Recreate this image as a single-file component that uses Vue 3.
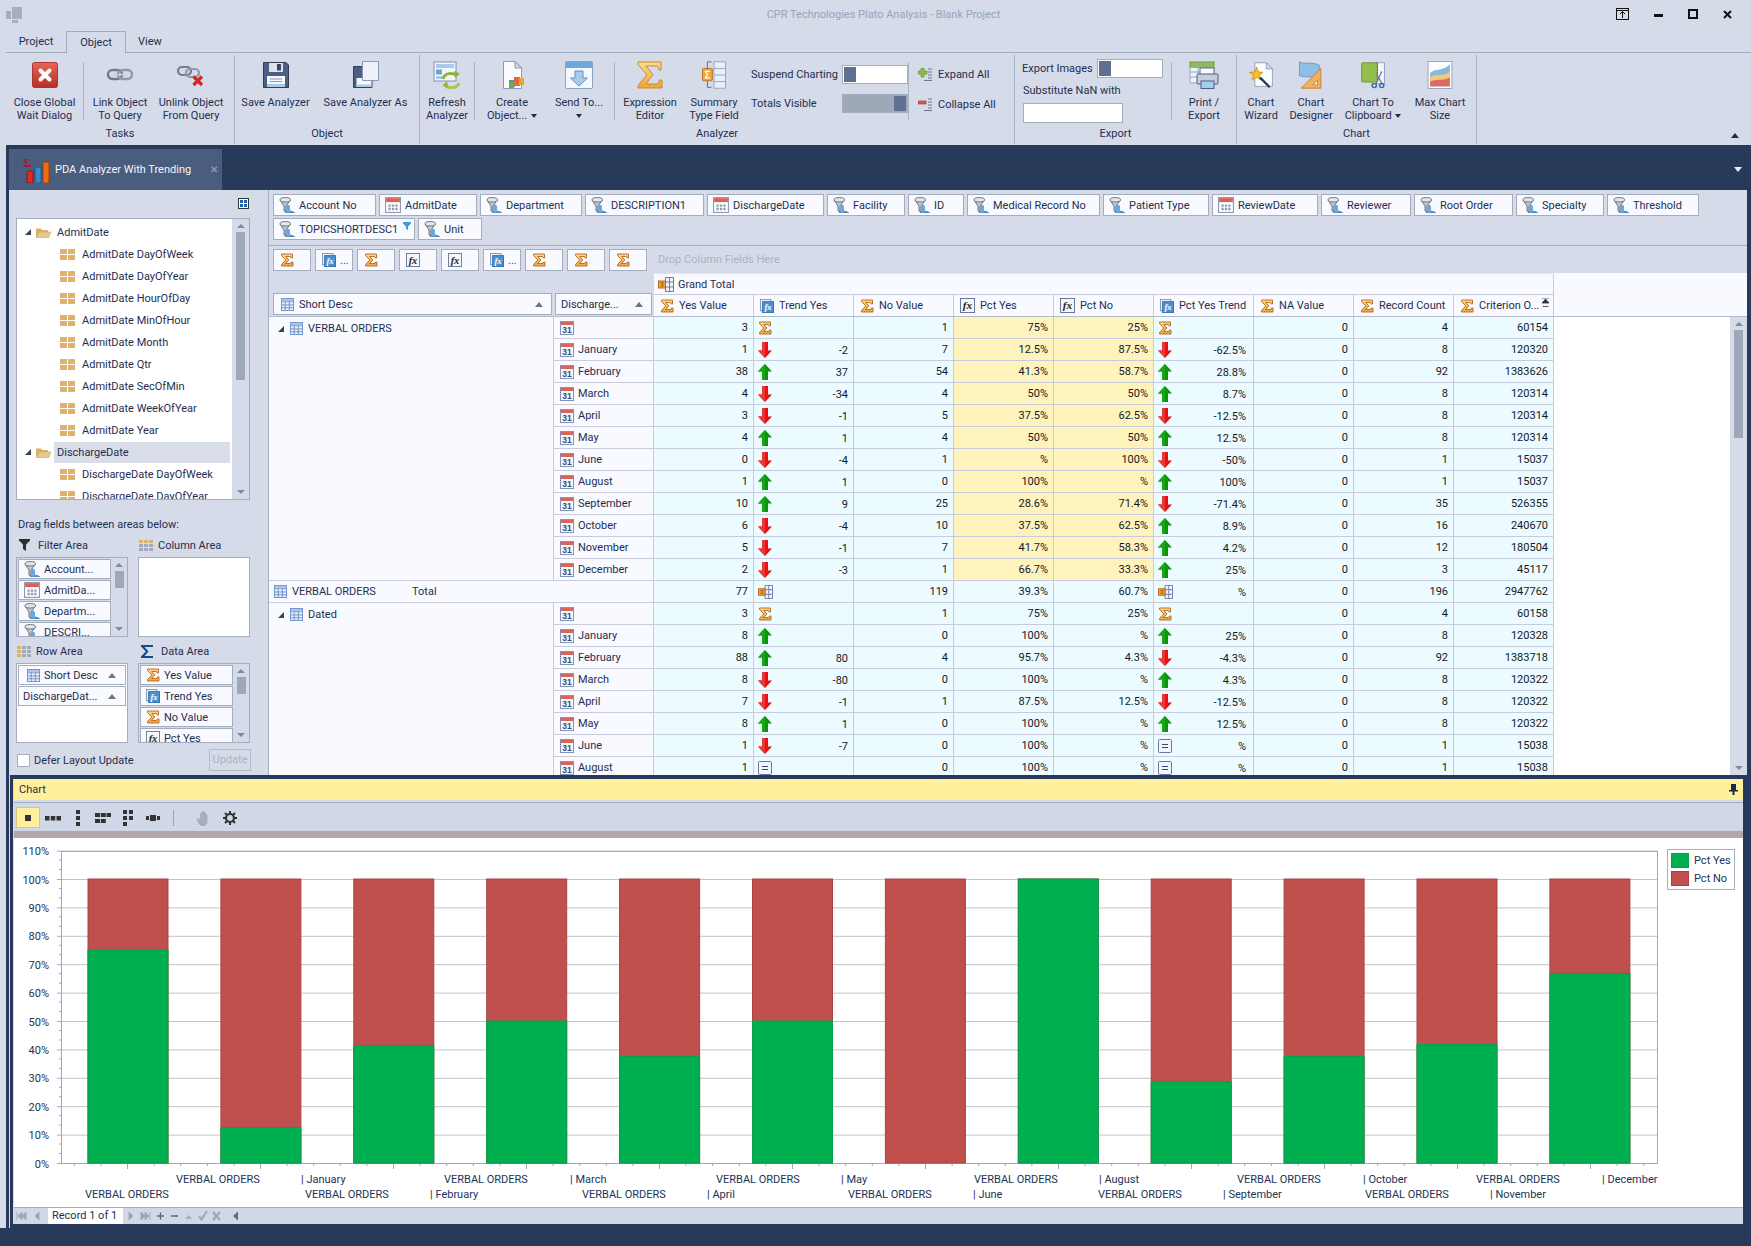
<template>
  <div class="app">
    <!-- icon sheet -->
    <svg class="defs" width="0" height="0">
      <defs>
        <linearGradient id="g-red" x1="0" y1="0" x2="0" y2="1"><stop offset="0" stop-color="#e8655a" /><stop offset="1" stop-color="#b92e27" /></linearGradient>
        <linearGradient id="g-sig" x1="0" y1="0" x2="0" y2="1"><stop offset="0" stop-color="#fbd98a" /><stop offset="1" stop-color="#eda63c" /></linearGradient>
      </defs>
      <symbol id="i-field" viewBox="0 0 16 16">
        <path d="M6.5 8.5V15.5A8 7.500 0 0 1 15.500 15.500H6.500Z" transform="translate(0 0)" fill="#5f9fd8" stroke="#3c7db8" stroke-width=".8" />
        <path d="M1 3L5 9V14L7 15V9L11.500 3Z" fill="#c3c8cf" stroke="#70757d" />
        <path d="M11 9.500V15.500H7V7.500C9 7.500 11 8 11 9.500Z" fill="#6aa8e0" />
        <ellipse cx="6.300" cy="2.800" rx="5.300" ry="2.200" fill="#e4e7ea" stroke="#70757d" />
      </symbol>
      <symbol id="i-date" viewBox="0 0 14 14">
        <rect x=".5" y=".5" width="13" height="13" fill="#fff" stroke="#8f9ab0" />
        <rect x="1" y="1" width="12" height="3.500" fill="#dc5f55" />
        <path d="M3 6.500h2v2H3zM6 6.500h2v2H6zM9 6.500h2v2H9zM3 9.500h2v2H3zM6 9.500h2v2H6zM9 9.500h2v2H9z" fill="#8a9bbd" />
      </symbol>
      <symbol id="i-sigma" viewBox="0 0 14 14">
        <path d="M1.500 1H12.500V5H11.200L10.500 3.500H5.800L8.800 7L5.500 10.500H10.800L11.500 9H13V13H1.500V11.500L5.800 7L1.500 2.500Z" fill="url(#g-sig)" stroke="#b8661a" stroke-width=".9" />
      </symbol>
      <symbol id="i-fx" viewBox="0 0 16 16">
        <rect x=".5" y=".5" width="15" height="15" fill="#f4f6fb" stroke="#5d7196" />
        <text x="8" y="12" text-anchor="middle" font-family="Liberation Serif, serif" font-style="italic" font-weight="700" font-size="12" fill="#222">fx</text>
      </symbol>
      <symbol id="i-fxb" viewBox="0 0 16 16">
        <rect x=".5" y=".5" width="12" height="13" fill="#eef1f7" stroke="#8090ad" />
        <rect x="3" y="3" width="12.500" height="12.500" fill="#4b90d3" stroke="#2f6cab" />
        <text x="9.200" y="13" text-anchor="middle" font-family="Liberation Serif, serif" font-style="italic" font-weight="700" font-size="10" fill="#fff">fx</text>
      </symbol>
      <symbol id="i-table" viewBox="0 0 14 14">
        <rect x=".5" y=".5" width="13" height="13" fill="#e8f0fb" stroke="#6c90c6" />
        <path d="M.5 4h13M.5 7.500h13M.5 10.500h13M4.500.5v13M9 .5v13" stroke="#6c90c6" fill="none" />
        <rect x="1" y="1" width="12" height="2.500" fill="#a9c4e8" />
      </symbol>
      <symbol id="i-cal" viewBox="0 0 14 14">
        <rect x=".5" y=".5" width="13" height="13" fill="#f5f7fc" stroke="#7f93bd" />
        <rect x="1" y="1" width="12" height="3" fill="#d9645a" />
        <text x="7" y="12.300" text-anchor="middle" font-family="Liberation Sans, sans-serif" font-weight="700" font-size="8.500" fill="#3d4d70">31</text>
      </symbol>
      <symbol id="i-up" viewBox="0 0 14 16"><path d="M7 0L14 7.500H10V16H4V7.500H0Z" fill="#0f930f" /><path d="M7 0L7 16H4V7.500H0Z" fill="#16a616" /></symbol>
      <symbol id="i-down" viewBox="0 0 14 16"><path d="M4 0H10V8.500H14L7 16L0 8.500H4Z" fill="#f20c0c" /><path d="M4 0H7V16L0 8.500H4Z" fill="#e63a3a" /></symbol>
      <symbol id="i-eq" viewBox="0 0 14 14"><rect x=".5" y=".5" width="13" height="13" rx="1" fill="#f2f5fb" stroke="#6677a6" /><path d="M4 5.500h6M4 8.500h6" stroke="#3a4668" /></symbol>
      <symbol id="i-gt" viewBox="0 0 16 15">
        <path d="M7.500.5H15.500V14.500H7.500ZM7.500 5H15.500M7.500 10H15.500M11.500.5V14.500" fill="#f2f5fb" stroke="#6a7fa8" />
        <rect x=".5" y="4" width="7" height="7" fill="#f0a63c" stroke="#b8661a" />
        <path d="M2.500 6h3l-1.500 1.500L5.500 9h-3" fill="none" stroke="#8a4a10" stroke-width=".8" />
      </symbol>
      <symbol id="i-folder" viewBox="0 0 15 11">
        <path d="M0 1.500H5L6 3H12V5H3.500L0 11Z" fill="#d8b26b" />
        <path d="M3.500 5H15L12.500 11H0Z" fill="#e7c88f" stroke="#cfa964" stroke-width=".6" />
      </symbol>
      <symbol id="i-grid" viewBox="0 0 15 11"><path d="M0 0h7v5H0zM8 0h7v5H8zM0 6h7v5H0zM8 6h7v5H8z" fill="#dcb26c" /></symbol>
      <symbol id="i-grid-col" viewBox="0 0 14 11">
        <path d="M0 0h4v3H0zM5 0h4v3H5zM10 0h4v3h-4z" fill="#dcb26c" />
        <path d="M0 4h4v3H0zM5 4h4v3H5zM10 4h4v3h-4zM0 8h4v3H0zM5 8h4v3H5zM10 8h4v3h-4z" fill="#a3abba" />
      </symbol>
      <symbol id="i-grid-row" viewBox="0 0 14 11">
        <path d="M0 0h4v3H0zM0 4h4v3H0zM0 8h4v3H0z" fill="#dcb26c" />
        <path d="M5 0h4v3H5zM10 0h4v3h-4zM5 4h4v3H5zM10 4h4v3h-4zM5 8h4v3H5zM10 8h4v3h-4z" fill="#a3abba" />
      </symbol>
      <symbol id="i-funnel" viewBox="0 0 11 12"><path d="M0 0H11V1.500L7 5.500V12L4 10V5.500L0 1.500Z" fill="#2e2e2e" /></symbol>
      <symbol id="i-sigma-blue" viewBox="0 0 12 13"><path d="M0 0H12V2H3.500L7.500 6.500L3.500 11H12V13H0V11.500L4.800 6.500L0 1.500Z" fill="#0e4d8f" /></symbol>
      <symbol id="i-filter-small" viewBox="0 0 8 8"><path d="M0 0H8V1.500L5 4.500V8L3 7V4.500L0 1.500Z" fill="#3d9be0" /></symbol>
      <symbol id="i-tab" viewBox="0 0 27 27">
        <text x="0" y="11" font-family="Liberation Serif, serif" font-weight="700" font-size="13" fill="#b01818">Σ</text>
        <rect x="4" y="15" width="6" height="12" rx="1" fill="#d92b20" stroke="#7c120c" stroke-width=".8" />
        <rect x="12" y="11" width="6" height="16" rx="1" fill="#3d87c8" stroke="#1c4d7c" stroke-width=".8" />
        <rect x="20" y="6" width="6" height="21" rx="1" fill="#f06a12" stroke="#8c3a08" stroke-width=".8" />
      </symbol>

      <!-- ribbon -->
      <symbol id="r-close" viewBox="0 0 28 28">
        <rect x="1.500" y="1.500" width="25" height="25" rx="2" fill="url(#g-red)" stroke="#a33a33" />
        <path d="M9.500 9.500L18.500 18.500M18.500 9.500L9.500 18.500" stroke="#fff" stroke-width="4" stroke-linecap="round" />
      </symbol>
      <symbol id="r-link" viewBox="0 0 28 28">
        <rect x="2" y="9" width="14" height="9" rx="4.500" fill="none" stroke="#6f7d92" stroke-width="2.400" />
        <rect x="12" y="9" width="14" height="9" rx="4.500" fill="none" stroke="#8d99ab" stroke-width="2.400" />
        <path d="M8 13.500H20" stroke="#c5ccd6" stroke-width="1.600" />
      </symbol>
      <symbol id="r-unlink" viewBox="0 0 28 28">
        <rect x="1" y="6" width="13" height="8" rx="4" fill="none" stroke="#6f7d92" stroke-width="2.200" />
        <rect x="9" y="8" width="13" height="8" rx="4" fill="none" stroke="#8d99ab" stroke-width="2.200" />
        <path d="M16.500 15.500L25 24M25 15.500L16.500 24" stroke="#d9261c" stroke-width="3.200" />
      </symbol>
      <symbol id="r-save" viewBox="0 0 28 28">
        <path d="M1.500 1.500H24L26.500 4V26.500H1.500Z" fill="#4d5f82" stroke="#2f3d5a" />
        <rect x="7" y="2" width="14" height="9" fill="#dfe4ec" /><rect x="15" y="3" width="4" height="6.500" fill="#3a4866" />
        <rect x="5" y="15" width="18" height="11" fill="#f5f7fa" /><rect x="5" y="23" width="18" height="3" fill="#a7cbe8" />
        <path d="M8 18h12M8 20.500h12" stroke="#8b97ad" />
      </symbol>
      <symbol id="r-saveas" viewBox="0 0 28 28">
        <path d="M1.500 5.500H20V26.500H1.500Z" fill="#4d5f82" stroke="#2f3d5a" />
        <rect x="4.500" y="17" width="15" height="9" fill="#f5f7fa" /><rect x="4.500" y="23.500" width="15" height="2.500" fill="#a7cbe8" />
        <path d="M10.500 .5H26.500V19.500H10.500Z" fill="#eef2f8" stroke="#8a9ab8" />
      </symbol>
      <symbol id="r-refresh" viewBox="0 0 28 28">
        <rect x="1" y="1" width="22" height="19" fill="#f2f6fb" stroke="#7d93b8" />
        <rect x="3" y="3" width="18" height="4" fill="#a9c9ea" /><rect x="3" y="8.500" width="6" height="5" fill="#6ea3d8" /><rect x="3" y="15" width="6" height="3" fill="#a9c9ea" />
        <path d="M10 18A8 7 0 0 1 24 15" fill="none" stroke="#8bb43e" stroke-width="3" />
        <path d="M26 22A8 7 0 0 1 12 24" fill="none" stroke="#a4c94c" stroke-width="3" />
        <path d="M21 10L27 12.500L22 17ZM15 27L9.500 24.500L14 20Z" fill="#8bb43e" />
      </symbol>
      <symbol id="r-create" viewBox="0 0 28 28">
        <path d="M5.500 .5H17L23.500 7V27.500H5.500Z" fill="#fbfcfe" stroke="#8a9ab8" />
        <path d="M17 .5V7H23.500Z" fill="#cfd8e6" stroke="#8a9ab8" />
        <rect x="11" y="19" width="6" height="7" fill="#4a8fc9" /><rect x="16" y="16" width="6" height="9" fill="#e2683a" /><rect x="21" y="17" width="5" height="7" fill="#e8a33c" /><rect x="11" y="21" width="5" height="6" fill="#6cae45" />
      </symbol>
      <symbol id="r-send" viewBox="0 0 28 28">
        <rect x=".5" y=".5" width="27" height="27" rx="1" fill="#f4f8fd" stroke="#8aa2c4" />
        <rect x="1" y="1" width="26" height="6" fill="#6ea6de" />
        <path d="M10 10H18V17H22.500L14 25L5.500 17H10Z" fill="#a6cdf0" stroke="#5b8fc4" />
      </symbol>
      <symbol id="r-sigma" viewBox="0 0 28 28">
        <path d="M2 1H25V9H23L21.500 5H10L17 13.500L10 23H22L23.500 19H26V27H2V24.500L11 13.800L2 3.500Z" fill="url(#g-sig)" stroke="#c98a2c" />
      </symbol>
      <symbol id="r-summary" viewBox="0 0 30 34">
        <path d="M12 1H7V9M7 24V32H12" fill="none" stroke="#4d5a73" />
        <rect x="15" y="1" width="14" height="32" fill="#eaf0fa" stroke="#8a9ab8" />
        <path d="M15 9H29M15 17H29M15 25H29" stroke="#8a9ab8" />
        <rect x="1" y="9" width="12" height="15" rx="1" fill="#f0a63c" stroke="#b8661a" />
        <path d="M4 12.500H10M4 20.500H10M4 12.500L7.500 16.500L4 20.500" fill="none" stroke="#fff" stroke-width="1.500" />
      </symbol>
      <symbol id="r-print" viewBox="0 0 30 28">
        <rect x="1" y="1" width="24" height="5.500" fill="#8dbb55" stroke="#6e9c3a" />
        <path d="M1 6.500H25V22H1ZM1 11H25M1 16H25M9 1V22M17 1V22" fill="#eef3f9" stroke="#94a6c2" />
        <rect x="11" y="7" width="14" height="7" fill="#f7f9fc" stroke="#5d6d88" />
        <rect x="8" y="13" width="21" height="10" rx="1" fill="#c4cfde" stroke="#4f5f7c" />
        <rect x="12" y="20" width="13" height="7.500" fill="#9fd0ef" stroke="#4f5f7c" />
      </symbol>
      <symbol id="r-wizard" viewBox="0 0 28 32">
        <path d="M7 2H20L27 9V29H7Z" fill="#fbfcfe" stroke="#8a9ab8" />
        <path d="M20 2V9H27Z" fill="#d4dcea" stroke="#8a9ab8" />
        <path d="M9 7L11 12.500L16 13L12.200 16.200L13.500 21.500L9 18.500L4 21.500L5.600 16.200L1 13L6.800 12.500Z" fill="#f4c22f" stroke="#d18e0c" />
        <path d="M13 19L24 30" stroke="#2e3548" stroke-width="2.600" />
      </symbol>
      <symbol id="r-designer" viewBox="0 0 30 34">
        <path d="M1 1C8 5 14 0 25 5V21C14 17 8 21 1 18Z" fill="#8fbfe6" stroke="#5f93bf" />
        <path d="M27 9V33H3Z" fill="#f0b060" stroke="#b9782d" />
        <path d="M23 23V29H17Z" fill="#f8f1e2" stroke="#b9782d" />
      </symbol>
      <symbol id="r-clip" viewBox="0 0 28 32">
        <rect x="13" y="2" width="14" height="24" fill="#f4f7fc" stroke="#8a9ab8" />
        <rect x="1" y="2" width="18" height="22" rx="1" fill="#93bf4a" stroke="#6d9332" />
        <path d="M19 2V24" stroke="#3f6a1c" stroke-dasharray="2 1.500" />
        <path d="M17 27L24 12M25 27L18 15" stroke="#6d7a93" stroke-width="1.400" />
        <circle cx="15.500" cy="28" r="2.400" fill="none" stroke="#2f6cab" stroke-width="1.600" />
        <circle cx="24" cy="28" r="2.400" fill="none" stroke="#2f6cab" stroke-width="1.600" />
      </symbol>
      <symbol id="r-max" viewBox="0 0 30 34">
        <rect x=".5" y=".5" width="29" height="33" fill="#fcfdfe" stroke="#8a9ab8" />
        <path d="M3 15C10 8 16 14 27 4V27H3Z" fill="#8ab6de" />
        <path d="M3 20C10 14 17 20 27 13V27H3Z" fill="#f3c77c" />
        <path d="M3 25C10 21 18 25 27 20V31H3Z" fill="#d96a5f" />
      </symbol>
    </svg>

    <header class="title-bar">
      <svg class="app-logo" viewBox="0 0 16 16" width="16" height="16">
        <path d="M6 0h10v12H6zM0 4h5v8H0zM6 13h6v3H6z" fill="#a5aebf" />
      </svg>
      <div class="title-text">CPR Technologies Plato Analysis - Blank Project</div>
      <div class="win-btns">
        <svg viewBox="0 0 13 12" width="13" height="12"><rect x=".5" y=".5" width="12" height="11" fill="none" stroke="#111" /><path d="M.5 2.500h12M6.500 10V4M4 6l2.500-2.500L9 6" fill="none" stroke="#111" /></svg>
        <svg viewBox="0 0 9 12" width="9" height="12"><rect x="0" y="6" width="9" height="3" fill="#111" /></svg>
        <svg viewBox="0 0 10 10" width="10" height="10"><rect x="1" y="1" width="8" height="8" fill="none" stroke="#111" stroke-width="2" /></svg>
        <svg viewBox="0 0 9 9" width="9" height="9"><path d="M1 1l7 7M8 1L1 8" stroke="#111" stroke-width="2" /></svg>
      </div>
    </header>

    <nav class="ribbon-tabs">
      <span class="rtab">Project</span>
      <span class="rtab active">Object</span>
      <span class="rtab">View</span>
    </nav>

    <section class="ribbon">
      <div class="rgroup tasks">
        <div class="rgroup-body">
          <div class="rbtn w77"><svg class="ricon"><use href="#r-close" /></svg><span>Close Global<br />Wait Dialog</span></div>
          <i class="rsep"></i>
          <div class="rbtn w72"><svg class="ricon"><use href="#r-link" /></svg><span>Link Object<br />To Query</span></div>
          <div class="rbtn w70"><svg class="ricon"><use href="#r-unlink" /></svg><span>Unlink Object<br />From Query</span></div>
        </div>
        <div class="rgroup-label">Tasks</div>
      </div>
      <div class="rgroup object">
        <div class="rgroup-body">
          <div class="rbtn w81"><svg class="ricon"><use href="#r-save" /></svg><span>Save Analyzer</span></div>
          <div class="rbtn w99"><svg class="ricon"><use href="#r-saveas" /></svg><span>Save Analyzer As</span></div>
        </div>
        <div class="rgroup-label">Object</div>
      </div>
      <div class="rgroup analyzer">
        <div class="rgroup-body">
          <div class="rbtn w54"><svg class="ricon"><use href="#r-refresh" /></svg><span>Refresh<br />Analyzer</span></div>
          <i class="rsep"></i>
          <div class="rbtn w74"><svg class="ricon"><use href="#r-create" /></svg><span>Create<br />Object... <b class="caret"></b></span></div>
          <div class="rbtn w60"><svg class="ricon"><use href="#r-send" /></svg><span>Send To...<br /><b class="caret"></b></span></div>
          <i class="rsep sep-a"></i>
          <div class="rbtn w70"><svg class="ricon"><use href="#r-sigma" /></svg><span>Expression<br />Editor</span></div>
          <div class="rbtn w58"><svg class="ricon"><use href="#r-summary" /></svg><span>Summary<br />Type Field</span></div>
          <div class="toggles">
            <div class="toggle-row"><span>Suspend Charting</span><div class="toggle off"><i></i></div></div>
            <div class="toggle-row"><span>Totals Visible</span><div class="toggle on"><i></i></div></div>
          </div>
          <i class="rsep"></i>
          <div class="expanders">
            <div class="exp-row">
              <svg viewBox="0 0 14 13" width="14" height="13"><path d="M0 3h3V0h3v3h3v3H6v3H3V6H0z" fill="#8fbc3f" stroke="#5e8a20" stroke-width=".6" /><path d="M10 1h4M10 4h4M10 7h4M10 10h4M6 12.500h8" stroke="#6a7690" /></svg>
              Expand All
            </div>
            <div class="exp-row">
              <svg viewBox="0 0 14 13" width="14" height="13"><rect x="0" y="3" width="8" height="3" fill="#e0564c" stroke="#a8342c" stroke-width=".6" /><path d="M10 1h4M10 4h4M10 7h4M10 10h4M6 12.500h8" stroke="#6a7690" /></svg>
              Collapse All
            </div>
          </div>
        </div>
        <div class="rgroup-label">Analyzer</div>
      </div>
      <div class="rgroup export">
        <div class="rgroup-body">
          <div class="export-form">
            <div class="toggle-row small"><span>Export Images</span><div class="toggle off"><i></i></div></div>
            <div class="nan-label">Substitute NaN with</div>
            <div class="nan-input"></div>
          </div>
          <i class="rsep"></i>
          <div class="rbtn w64"><svg class="ricon print"><use href="#r-print" /></svg><span>Print /<br />Export</span></div>
        </div>
        <div class="rgroup-label shift">Export</div>
      </div>
      <div class="rgroup chart-g">
        <div class="rgroup-body">
          <div class="rbtn w48"><svg class="ricon"><use href="#r-wizard" /></svg><span>Chart<br />Wizard</span></div>
          <div class="rbtn w52"><svg class="ricon"><use href="#r-designer" /></svg><span>Chart<br />Designer</span></div>
          <div class="rbtn w72"><svg class="ricon"><use href="#r-clip" /></svg><span>Chart To<br />Clipboard <b class="caret"></b></span></div>
          <div class="rbtn w62"><svg class="ricon"><use href="#r-max" /></svg><span>Max Chart<br />Size</span></div>
        </div>
        <div class="rgroup-label">Chart</div>
      </div>
      <div class="ribbon-rest"><b class="caret up"></b></div>
    </section>

    <div class="workspace">
      <div class="doc-band">
        <div class="doc-tab">
          <svg class="doc-tab-icon"><use href="#i-tab" /></svg>
          <span>PDA Analyzer With Trending</span>
          <em>✕</em>
        </div>
        <b class="band-caret"></b>
      </div>

      <div class="doc-body">
        <div class="main-split">
          <aside class="field-pane">
            <div class="field-list">
              <div class="layout-btn">
                <svg viewBox="0 0 11 11" width="11" height="11"><rect x=".5" y=".5" width="10" height="10" fill="#fff" stroke="#333" /><path d="M2 2h3v3H2zM6 2h3v3H6zM2 6h3v3H2zM6 6h3v3H6z" fill="#1f63a8" /></svg>
              </div>
              <div class="tree">
                <div class="tree-rows">
                  <template v-for="row in treeRows" :key="row.text">
                    <div class="tree-row" :class="{ folder: row.folder, selected: row.selected }">
                      <b v-if="row.folder" class="tri"></b>
                      <svg v-if="row.folder" class="tree-ico"><use href="#i-folder" /></svg>
                      <svg v-else class="tree-ico"><use href="#i-grid" /></svg>
                      <span>{{ row.text }}</span>
                    </div>
                  </template>
                </div>
                <div class="vscroll">
                  <b class="sc-up"></b>
                  <i class="thumb tree-thumb"></i>
                  <b class="sc-down"></b>
                </div>
              </div>
              <div class="h-split"><i class="grip-h"></i></div>
              <div class="drag-label">Drag fields between areas below:</div>
              <div class="areas">
                <div class="area">
                  <div class="area-label"><svg class="a-ico funnel"><use href="#i-funnel" /></svg>Filter Area</div>
                  <div class="area-box">
                    <div class="area-chips">
                      <div v-for="c in filterChips" :key="c.text" class="area-chip">
                        <svg class="chip-ico"><use :href="'#' + c.icon" /></svg>{{ c.text }}
                      </div>
                    </div>
                    <div class="vscroll small">
                      <b class="sc-up"></b>
                      <i class="thumb s-thumb"></i>
                      <b class="sc-down"></b>
                    </div>
                  </div>
                </div>
                <div class="area">
                  <div class="area-label"><svg class="a-ico"><use href="#i-grid-col" /></svg>Column Area</div>
                  <div class="area-box white"></div>
                </div>
                <div class="area">
                  <div class="area-label"><svg class="a-ico"><use href="#i-grid-row" /></svg>Row Area</div>
                  <div class="area-box white row-box">
                    <div class="area-chips">
                      <div class="area-chip wide"><svg class="chip-ico t"><use href="#i-table" /></svg>Short Desc<b class="sort"></b></div>
                      <div class="area-chip wide plain">DischargeDat...<b class="sort"></b></div>
                    </div>
                  </div>
                </div>
                <div class="area">
                  <div class="area-label"><svg class="a-ico sig"><use href="#i-sigma-blue" /></svg>Data Area</div>
                  <div class="area-box">
                    <div class="area-chips">
                      <div v-for="c in dataChips" :key="c.text" class="area-chip">
                        <svg class="chip-ico d"><use :href="'#' + c.icon" /></svg>{{ c.text }}
                      </div>
                    </div>
                    <div class="vscroll small">
                      <b class="sc-up"></b>
                      <i class="thumb s-thumb"></i>
                      <b class="sc-down"></b>
                    </div>
                  </div>
                </div>
              </div>
              <div class="defer-row">
                <label class="defer"><i class="check"></i>Defer Layout Update</label>
                <div class="update-btn">Update</div>
              </div>
            </div>
            <div class="v-split"><i class="grip-v"></i></div>
          </aside>

          <section class="pivot">
            <div class="filter-fields">
              <div v-for="f in fieldChips" :key="f.text" class="chip" :style="{ width: f.w + 'px' }">
                <svg class="chip-ico"><use :href="'#' + f.icon" /></svg>
                <span>{{ f.text }}</span>
                <svg v-if="f.filtered" class="chip-flag"><use href="#i-filter-small" /></svg>
              </div>
            </div>
            <div class="col-fields">
              <div v-for="(c, i) in dataFieldChips" :key="i" class="chip data">
                <svg class="chip-ico d"><use :href="'#' + c.icon" /></svg>
                <span v-if="c.dots">...</span>
              </div>
              <span class="drop-hint">Drop Column Fields Here</span>
            </div>
            <div class="head-row">
              <div class="head-left">
                <div class="chip short"><svg class="chip-ico t"><use href="#i-table" /></svg><span>Short Desc</span><b class="sort"></b></div>
                <div class="chip disch"><span>Discharge...</span><b class="sort"></b></div>
              </div>
              <div class="head-right">
                <div class="grand">
                  <div class="grand-cell"><svg class="gt-ico"><use href="#i-gt" /></svg>Grand Total</div>
                </div>
                <div class="col-heads">
                  <div v-for="h in colHeads" :key="h.text" class="col-head" :class="h.icon">
                    <svg class="chip-ico d"><use :href="'#' + h.icon" /></svg><span>{{ h.text }}</span>
                    <svg v-if="h.sorted" class="sort-mark" viewBox="0 0 7 9"><path d="M0 0h7M.5 8.500h6M3.500 1L7 5H0z" stroke="#333" fill="#333" stroke-width=".8" /></svg>
                  </div>
                </div>
              </div>
            </div>
            <div class="pivot-body">
              <div class="pivot-grid">
                <div class="group">
                  <div class="group-label"><b class="tri"></b><svg class="chip-ico t"><use href="#i-table" /></svg>VERBAL ORDERS</div>
                  <div class="group-rows">
                    <div v-for="r in verbalRows" :key="r.month" class="grid-row marked">
                      <div class="cell month"><svg class="cal"><use href="#i-cal" /></svg>{{ r.month }}</div>
                      <div class="cell num">{{ r.yes }}</div>
                      <div class="cell num ic"><svg v-if="r.trendIcon" :class="r.trendIcon"><use :href="'#i-' + r.trendIcon" /></svg><em>{{ r.trend }}</em></div>
                      <div class="cell num">{{ r.no }}</div>
                      <div class="cell num pct">{{ r.pctYes }}</div>
                      <div class="cell num pct">{{ r.pctNo }}</div>
                      <div class="cell num ic tr"><svg v-if="r.pctIcon" :class="r.pctIcon"><use :href="'#i-' + r.pctIcon" /></svg><em>{{ r.pct }}</em></div>
                      <div class="cell num">{{ r.na }}</div>
                      <div class="cell num">{{ r.count }}</div>
                      <div class="cell num">{{ r.crit }}</div>
                    </div>
                  </div>
                </div>
                <div class="grid-row">
                  <div class="total-label"><svg class="chip-ico t"><use href="#i-table" /></svg><span class="tl-name">VERBAL ORDERS</span><span>Total</span></div>
                  <div class="cell num">77</div>
                  <div class="cell num ic"><svg class="gt"><use href="#i-gt" /></svg><em></em></div>
                  <div class="cell num">119</div>
                  <div class="cell num">39.3%</div>
                  <div class="cell num">60.7%</div>
                  <div class="cell num ic tr"><svg class="gt"><use href="#i-gt" /></svg><em>%</em></div>
                  <div class="cell num">0</div>
                  <div class="cell num">196</div>
                  <div class="cell num">2947762</div>
                </div>
                <div class="group">
                  <div class="group-label"><b class="tri"></b><svg class="chip-ico t"><use href="#i-table" /></svg>Dated</div>
                  <div class="group-rows">
                    <div v-for="r in datedRows" :key="r.month" class="grid-row">
                      <div class="cell month"><svg class="cal"><use href="#i-cal" /></svg>{{ r.month }}</div>
                      <div class="cell num">{{ r.yes }}</div>
                      <div class="cell num ic"><svg v-if="r.trendIcon" :class="r.trendIcon"><use :href="'#i-' + r.trendIcon" /></svg><em>{{ r.trend }}</em></div>
                      <div class="cell num">{{ r.no }}</div>
                      <div class="cell num">{{ r.pctYes }}</div>
                      <div class="cell num">{{ r.pctNo }}</div>
                      <div class="cell num ic tr"><svg v-if="r.pctIcon" :class="r.pctIcon"><use :href="'#i-' + r.pctIcon" /></svg><em>{{ r.pct }}</em></div>
                      <div class="cell num">{{ r.na }}</div>
                      <div class="cell num">{{ r.count }}</div>
                      <div class="cell num">{{ r.crit }}</div>
                    </div>
                  </div>
                </div>
              </div>
              <div class="vscroll big">
                <b class="sc-up"></b>
                <i class="thumb pivot-thumb"></i>
                <b class="sc-down"></b>
              </div>
            </div>
          </section>
        </div>

        <section class="chart-frame">
          <div class="chart-inner">
            <div class="chart-head">
              <span>Chart</span>
              <svg viewBox="0 0 9 11" width="9" height="11"><path d="M2 0h5v6h2v1.500H5.500V11h-2V7.500H0V6h2z" fill="#1f2b45" /></svg>
            </div>
            <div class="chart-tools">
              <div class="tool selected"><svg viewBox="0 0 16 16" width="16" height="16"><rect x="5" y="5" width="6" height="6" fill="#333" /></svg></div>
              <div class="tool"><svg viewBox="0 0 16 16" width="16" height="16"><path d="M0 6h4.500v4.500H0zM5.800 6h4.500v4.500H5.800zM11.500 6H16v4.500h-4.500z" fill="#333" /></svg></div>
              <div class="tool"><svg viewBox="0 0 16 16" width="16" height="16"><path d="M6 0h4v4H6zM6 6h4v4H6zM6 12h4v4H6z" fill="#333" /></svg></div>
              <div class="tool"><svg viewBox="0 0 16 16" width="16" height="16"><path d="M0 3h5v4H0zM5.800 3h5v4h-5zM11.500 3H16v4h-4.500zM0 9h5v4H0zM5.800 9h5v4h-5z" fill="#333" /></svg></div>
              <div class="tool"><svg viewBox="0 0 16 16" width="16" height="16"><path d="M3 0h4v4H3zM9 0h4v4H9zM3 6h4v4H3zM9 6h4v4H9zM3 12h4v4H3z" fill="#333" /></svg></div>
              <div class="tool"><svg viewBox="0 0 16 16" width="16" height="16"><path d="M1 6h3v4H1zM5 5h6v6H5zM12 6h3v4h-3z" fill="#333" /></svg></div>
              <i class="tool-sep"></i>
              <svg class="hand" viewBox="0 0 17 16" width="17" height="16"><path d="M4 9V4c0-1 1.500-1 1.500 0v3V2c0-1 1.500-1 1.500 0v5V1.500c0-1 1.500-1 1.500 0V7V3c0-1 1.500-1 1.500 0v4.500V5c0-1 1.500-1 1.500 0v6c0 3-2 5-5 5-2 0-3-1-4-2.500L1 9.500c-.8-1 .6-2 1.400-1.200z" fill="#a6aebd" /></svg>
              <svg class="gear" viewBox="0 0 14 14" width="14" height="14"><circle cx="7" cy="7" r="4" fill="none" stroke="#333" stroke-width="2.200" /><path d="M7 0v3M7 11v3M0 7h3M11 7h3M2 2l2 2M10 10l2 2M12 2l-2 2M4 10l-2 2" stroke="#333" stroke-width="2" /></svg>
            </div>
            <div class="chart-strip"></div>
            <svg class="plot" viewBox="14 836 1729 369" width="1729" height="369">
              <g class="grid-lines">
                <line v-for="t in yTicks" :key="t.label" x1="61" x2="1657" :y1="t.y" :y2="t.y" stroke="#c2c4c8" />
              </g>
              <rect x="61.500" y="849.500" width="1596" height="312" fill="none" stroke="#9fa9b8" />
              <g v-for="t in yTicks" :key="'t' + t.label">
                <line x1="57" x2="61" :y1="t.y" :y2="t.y" stroke="#9fa9b8" />
                <text x="49" :y="t.y + 4" text-anchor="end" class="axis-text">{{ t.label }}</text>
              </g>
              <line v-for="y in yMinor" :key="'m' + y" x1="59" x2="61" :y1="y" :y2="y" stroke="#9fa9b8" />
              <line v-for="x in xTicks" :key="'x' + x.x" :x1="x.x" :x2="x.x" y1="1161" :y2="x.major ? 1167 : 1164" stroke="#9fa9b8" />
              <g v-for="b in bars" :key="b.x">
                <rect :x="b.x" y="877" width="80" height="284" fill="#c0504d" stroke="#a84440" />
                <rect v-if="b.h" :x="b.x" :y="1161 - b.h" width="80" :height="b.h" fill="#00b050" stroke="#07a04c" />
              </g>
              <text v-for="l in xLabels" :key="l.x + l.text" :x="l.x" :y="l.y" class="axis-text">{{ l.text }}</text>
              <rect x="1667.500" y="847.500" width="67" height="40" fill="#fff" stroke="#a7b0bf" />
              <rect x="1671.500" y="851.500" width="17" height="14" fill="#00b050" stroke="#07a04c" />
              <rect x="1671.500" y="869.500" width="17" height="14" fill="#c0504d" stroke="#a84440" />
              <text x="1694" y="862" class="axis-text">Pct Yes</text>
              <text x="1694" y="880" class="axis-text">Pct No</text>
            </svg>
            <div class="chart-nav">
              <svg viewBox="0 0 32 16" width="32" height="16" class="nav-a"><path d="M1 4v8M2 8l4-4v8zM6 8l4-4v8zM19 8l4-4v8z" fill="#9aa5b8" stroke="#9aa5b8" stroke-width=".8" /></svg>
              <div class="record">Record 1 of 1</div>
              <svg viewBox="0 0 120 16" width="120" height="16" class="nav-b">
                <path d="M6 4l4 4-4 4zM18 4l4 4-4 4zM22 4l4 4-4 4zM27 4v8" fill="#9aa5b8" stroke="#9aa5b8" stroke-width=".8" />
                <path d="M34 8h7M37.500 4.500v7M48 8h7" stroke="#55647f" stroke-width="1.300" fill="none" />
                <path d="M62 11l3.500-4 3.500 4z" fill="#a1abbc" />
                <path d="M76 8l2.500 3.500L84 3" fill="none" stroke="#9aa5b8" stroke-width="2" />
                <path d="M90 4l7 8M97 4l-7 8" stroke="#9aa5b8" stroke-width="2.200" />
                <path d="M110 8l5-4.500v9z" fill="#5a6c8c" />
              </svg>
            </div>
          </div>
        </section>
      </div>
    </div>
    <div class="foot"></div>
  </div>
</template>

<script setup>
const fieldIcon = 'i-field'
const dateIcon = 'i-date'

const fieldChips = [
  { text: 'Account No', w: 103, icon: fieldIcon },
  { text: 'AdmitDate', w: 98, icon: dateIcon },
  { text: 'Department', w: 102, icon: fieldIcon },
  { text: 'DESCRIPTION1', w: 119, icon: fieldIcon },
  { text: 'DischargeDate', w: 117, icon: dateIcon },
  { text: 'Facility', w: 78, icon: fieldIcon },
  { text: 'ID', w: 56, icon: fieldIcon },
  { text: 'Medical Record No', w: 133, icon: fieldIcon },
  { text: 'Patient Type', w: 106, icon: fieldIcon },
  { text: 'ReviewDate', w: 106, icon: dateIcon },
  { text: 'Reviewer', w: 90, icon: fieldIcon },
  { text: 'Root Order', w: 99, icon: fieldIcon },
  { text: 'Specialty', w: 88, icon: fieldIcon },
  { text: 'Threshold', w: 92, icon: fieldIcon },
  { text: 'TOPICSHORTDESC1', w: 142, icon: fieldIcon, filtered: true },
  { text: 'Unit', w: 64, icon: fieldIcon },
]

const dataFieldChips = [
  { icon: 'i-sigma' },
  { icon: 'i-fxb', dots: true },
  { icon: 'i-sigma' },
  { icon: 'i-fx' },
  { icon: 'i-fx' },
  { icon: 'i-fxb', dots: true },
  { icon: 'i-sigma' },
  { icon: 'i-sigma' },
  { icon: 'i-sigma' },
]

const colHeads = [
  { text: 'Yes Value', icon: 'i-sigma' },
  { text: 'Trend Yes', icon: 'i-fxb' },
  { text: 'No Value', icon: 'i-sigma' },
  { text: 'Pct Yes', icon: 'i-fx' },
  { text: 'Pct No', icon: 'i-fx' },
  { text: 'Pct Yes Trend', icon: 'i-fxb' },
  { text: 'NA Value', icon: 'i-sigma' },
  { text: 'Record Count', icon: 'i-sigma' },
  { text: 'Criterion O...', icon: 'i-sigma', sorted: true },
]

const filterChips = [
  { text: 'Account...', icon: fieldIcon },
  { text: 'AdmitDa...', icon: dateIcon },
  { text: 'Departm...', icon: fieldIcon },
  { text: 'DESCRI...', icon: fieldIcon },
]

const dataChips = [
  { text: 'Yes Value', icon: 'i-sigma' },
  { text: 'Trend Yes', icon: 'i-fxb' },
  { text: 'No Value', icon: 'i-sigma' },
  { text: 'Pct Yes', icon: 'i-fx' },
]

const admitParts = ['DayOfWeek', 'DayOfYear', 'HourOfDay', 'MinOfHour', 'Month', 'Qtr', 'SecOfMin', 'WeekOfYear', 'Year']
const treeRows = [
  { text: 'AdmitDate', folder: true },
  ...admitParts.map((p) => ({ text: 'AdmitDate ' + p })),
  { text: 'DischargeDate', folder: true, selected: true },
  { text: 'DischargeDate DayOfWeek' },
  { text: 'DischargeDate DayOfYear' },
]

// month, yes, trend icon, trend, no, pct yes, pct no, pct icon, pct trend, na, count, criterion
const toRow = (a) => ({
  month: a[0], yes: a[1], trendIcon: a[2], trend: a[3], no: a[4], pctYes: a[5], pctNo: a[6],
  pctIcon: a[7], pct: a[8], na: a[9], count: a[10], crit: a[11],
})

const verbalRows = [
  ['', 3, 'sigma', '', 1, '75%', '25%', 'sigma', '', 0, 4, 60154],
  ['January', 1, 'down', -2, 7, '12.5%', '87.5%', 'down', '-62.5%', 0, 8, 120320],
  ['February', 38, 'up', 37, 54, '41.3%', '58.7%', 'up', '28.8%', 0, 92, 1383626],
  ['March', 4, 'down', -34, 4, '50%', '50%', 'up', '8.7%', 0, 8, 120314],
  ['April', 3, 'down', -1, 5, '37.5%', '62.5%', 'down', '-12.5%', 0, 8, 120314],
  ['May', 4, 'up', 1, 4, '50%', '50%', 'up', '12.5%', 0, 8, 120314],
  ['June', 0, 'down', -4, 1, '%', '100%', 'down', '-50%', 0, 1, 15037],
  ['August', 1, 'up', 1, 0, '100%', '%', 'up', '100%', 0, 1, 15037],
  ['September', 10, 'up', 9, 25, '28.6%', '71.4%', 'down', '-71.4%', 0, 35, 526355],
  ['October', 6, 'down', -4, 10, '37.5%', '62.5%', 'up', '8.9%', 0, 16, 240670],
  ['November', 5, 'down', -1, 7, '41.7%', '58.3%', 'up', '4.2%', 0, 12, 180504],
  ['December', 2, 'down', -3, 1, '66.7%', '33.3%', 'up', '25%', 0, 3, 45117],
].map(toRow)

const datedRows = [
  ['', 3, 'sigma', '', 1, '75%', '25%', 'sigma', '', 0, 4, 60158],
  ['January', 8, 'up', '', 0, '100%', '%', 'up', '25%', 0, 8, 120328],
  ['February', 88, 'up', 80, 4, '95.7%', '4.3%', 'down', '-4.3%', 0, 92, 1383718],
  ['March', 8, 'down', -80, 0, '100%', '%', 'up', '4.3%', 0, 8, 120322],
  ['April', 7, 'down', -1, 1, '87.5%', '12.5%', 'down', '-12.5%', 0, 8, 120322],
  ['May', 8, 'up', 1, 0, '100%', '%', 'up', '12.5%', 0, 8, 120322],
  ['June', 1, 'down', -7, 0, '100%', '%', 'eq', '%', 0, 1, 15038],
  ['August', 1, 'eq', '', 0, '100%', '%', 'eq', '%', 0, 1, 15038],
].map(toRow)

// chart
const zero = 1161
const perPct = 2.84
const yTicks = Array.from({ length: 12 }, (_, i) => ({
  label: i * 10 + '%',
  y: zero - i * 10 * perPct + 0.5,
}))
const yMinor = []
for (let i = 0; i < 11; i++) {
  yMinor.push(zero - (i * 10 + 3.33) * perPct, zero - (i * 10 + 6.67) * perPct)
}
const xTicks = []
for (let i = 0; i < 60; i++) {
  const x = 61 + 13.3 + i * 26.6
  xTicks.push({ x, major: i % 5 === 2 })
}
const pctYes = [75, 12.5, 41.3, 50, 37.5, 50, 0, 100, 28.6, 37.5, 41.7, 66.7]
const bars = pctYes.map((p, i) => ({ x: 88 + i * 132.9, h: p * perPct }))

const vo = 'VERBAL ORDERS'
const row1 = [[176, vo], [301, '| January'], [444, vo], [570, '| March'], [716, vo], [841, '| May'], [974, vo], [1099, '| August'], [1237, vo], [1363, '| October'], [1476, vo], [1602, '| December']]
const row2 = [[85, vo], [305, vo], [430, '| February'], [582, vo], [707, '| April'], [848, vo], [973, '| June'], [1098, vo], [1223, '| September'], [1365, vo], [1490, '| November']]
const xLabels = [
  ...row1.map(([x, text]) => ({ x, text, y: 1181 })),
  ...row2.map(([x, text]) => ({ x, text, y: 1196 })),
]
</script>

<style>
html, body { margin: 0; padding: 0; background: #29395a; }
</style>

<style scoped>
.app {
  width: 1751px;
  height: 1246px;
  overflow: hidden;
  display: flex;
  flex-direction: column;
  background: #d5dbe8;
  color: #1f2e50;
  font-family: Roboto, "Liberation Sans", sans-serif;
  font-size: 11px;
}
.defs { display: block; width: 0; height: 0; overflow: hidden; }
svg { display: block; flex: none; }

/* title bar */
.title-bar {
  height: 31px;
  flex: none;
  display: flex;
  align-items: flex-start;
  box-sizing: border-box;
  padding: 7px 14px 0 6px;
}
.title-text {
  flex: 1;
  text-align: center;
  color: #98a3b9;
  line-height: 16px;
  padding-left: 129px;
}
.win-btns { display: flex; align-items: center; gap: 25px; padding-top: 1px; width: 121px; box-sizing: border-box; }

.ribbon-tabs { height: 21px; flex: none; display: flex; padding-left: 6px; }
.rtab { padding: 0 12px; line-height: 22px; margin-left: 0; width: 36px; text-align: center; }
.rtab.active {
  width: 34px;
  background: #d5dbe8;
  border: 1px solid #a1acbf;
  border-bottom: none;
  margin-bottom: -1px;
  position: relative;
  z-index: 1;
}
.rtab:last-child { width: 22px; }

/* ribbon */
.ribbon {
  height: 93px;
  flex: none;
  box-sizing: border-box;
  margin-left: 6px;
  border-top: 1px solid #a1acbf;
  display: flex;
  padding-top: 2px;
}
.rgroup {
  height: 89px;
  flex: none;
  border-right: 1px solid #a9b3c6;
  display: flex;
  flex-direction: column;
  box-sizing: border-box;
}
.tasks { width: 229px; }
.object { width: 185px; }
.analyzer { width: 595px; }
.export { width: 222px; }
.chart-g { width: 240px; }
.rgroup-body { flex: 1; display: flex; }
.rgroup-label { text-align: center; height: 17px; line-height: 14px; }
.rgroup-label.shift { padding-right: 20px; }
.rbtn {
  flex: none;
  display: flex;
  flex-direction: column;
  align-items: center;
  text-align: center;
  line-height: 13px;
  padding-top: 6px;
  box-sizing: border-box;
}
.ricon { width: 28px; height: 28px; margin-bottom: 7px; }
.w48 { width: 48px; } .w52 { width: 52px; } .w54 { width: 54px; } .w58 { width: 58px; }
.w60 { width: 60px; } .w62 { width: 62px; } .w64 { width: 64px; } .w70 { width: 70px; }
.w72 { width: 72px; } .w74 { width: 74px; } .w77 { width: 77px; } .w81 { width: 81px; } .w99 { width: 99px; }
.rsep { flex: none; width: 1px; height: 58px; margin-top: 7px; background: #a9b3c6; }
.sep-a { margin-left: 5px; }
.caret {
  display: inline-block;
  border-left: 3.5px solid transparent;
  border-right: 3.5px solid transparent;
  border-top: 4px solid #222c40;
  vertical-align: middle;
  margin-left: 1px;
}
.caret.up { border-top: none; border-bottom: 5px solid #222c40; border-left-width: 4px; border-right-width: 4px; }
.ribbon-rest { flex: 1; display: flex; justify-content: flex-end; align-items: flex-end; padding: 0 12px 7px 0; }

.toggles { width: 157px; margin-left: 8px; padding-top: 10px; display: flex; flex-direction: column; gap: 10px; }
.toggle-row { display: flex; justify-content: space-between; align-items: center; height: 19px; }
.toggle { width: 66px; height: 19px; box-sizing: border-box; border: 1px solid #a3adbd; background: #fff; padding: 1px; display: flex; }
.toggle i { width: 12px; background: #5f7090; }
.toggle.on { background: #9da8b9; justify-content: flex-end; border-color: #fff; outline: 1px solid #a3adbd; outline-offset: -1px; }
.expanders { width: 80px; padding: 13px 0 0 9px; display: flex; flex-direction: column; gap: 17px; box-sizing: content-box; flex: none; }
.exp-row { display: flex; align-items: center; gap: 6px; height: 13px; white-space: nowrap; }
.export-form { width: 149px; margin-left: 7px; padding-top: 4px; flex: none; }
.toggle-row.small { width: 141px; }
.nan-label { margin-top: 6px; line-height: 14px; padding-left: 1px; }
.nan-input { margin-top: 5px; margin-left: 1px; width: 100px; height: 20px; box-sizing: border-box; border: 1px solid #a3adbd; background: #fff; }
.print { width: 30px; }

/* doc tabs */
.workspace { margin-left: 6px; flex: 1; min-height: 0; display: flex; flex-direction: column; background: #29395a; }
.doc-band { height: 45px; flex: none; display: flex; align-items: flex-end; justify-content: space-between; }
.doc-tab {
  width: 213px;
  height: 41px;
  margin-left: 3px;
  box-sizing: border-box;
  background: #4a5d7e;
  color: #f4f6fa;
  display: flex;
  align-items: center;
  padding-left: 14px;
  gap: 5px;
}
.doc-tab-icon { width: 27px; height: 27px; }
.doc-tab em { font-style: normal; color: #8d98ad; font-weight: 700; margin-left: 14px; font-size: 10px; }
.band-caret {
  border-left: 4px solid transparent;
  border-right: 4px solid transparent;
  border-top: 5px solid #e8ecf3;
  margin: 0 9px 18px 0;
}
.doc-body { flex: 1; min-height: 0; padding: 0 4px 0 3px; display: flex; flex-direction: column; }
.main-split { height: 585px; flex: none; display: flex; background: #d5dbe8; }

/* left field pane */
.field-pane { width: 260px; flex: none; display: flex; }
.field-list { width: 234px; margin-left: 7px; flex: none; }
.layout-btn { height: 28px; display: flex; justify-content: flex-end; align-items: flex-start; padding: 8px 1px 0 0; box-sizing: border-box; }
.tree {
  height: 282px;
  box-sizing: border-box;
  border: 1px solid #a3adbd;
  background: #fff;
  display: flex;
}
.tree-rows { flex: 1; min-width: 0; overflow: hidden; padding-top: 2px; }
.tree-row { height: 22px; display: flex; align-items: center; padding-left: 43px; gap: 7px; white-space: nowrap; }
.tree-row.folder { padding-left: 8px; gap: 0; }
.tree-row.selected span { background: #d8dde7; width: 176px; margin-left: 1px; line-height: 21px; padding-left: 3px; box-sizing: border-box; }
.tree-row:not(.folder) { font-size: 11px; }
.tree-ico { width: 15px; height: 11px; }
.tree-row.folder .tree-ico { margin: 0 6px 0 5px; }
.tree-row.selected .tree-ico { margin-right: 2px; }
.tri {
  width: 0;
  height: 0;
  flex: none;
  border-left: 6px solid transparent;
  border-bottom: 6px solid #3a4150;
}
.vscroll {
  width: 17px;
  flex: none;
  display: flex;
  flex-direction: column;
  align-items: center;
  box-sizing: border-box;
  padding-top: 5px;
  background: #d5dbe8;
}
.sc-up, .sc-down { width: 0; height: 0; border-left: 4px solid transparent; border-right: 4px solid transparent; flex: none; }
.sc-up { border-bottom: 4px solid #7d8aa2; }
.sc-down { border-top: 4px solid #7d8aa2; margin-top: auto; margin-bottom: 5px; }
.thumb { width: 9px; flex: none; background: #9da8b9; margin-top: 4px; }
.tree-thumb { height: 148px; }
.s-thumb { height: 17px; }
.pivot-thumb { height: 108px; }
.h-split { height: 18px; display: flex; justify-content: center; padding-top: 5px; box-sizing: border-box; }
.grip-h {
  width: 17px;
  height: 5px;
  background-image: radial-gradient(#8d98ad 0.6px, transparent 0.7px);
  background-size: 2px 2px;
}
.drag-label { height: 19px; line-height: 14px; padding-left: 2px; }
.areas { display: grid; grid-template-columns: 112px 112px; column-gap: 10px; row-gap: 6px; }
.area-label { height: 20px; display: flex; align-items: center; gap: 5px; padding: 0 0 4px 1px; box-sizing: border-box; }
.a-ico { width: 14px; height: 11px; }
.a-ico.funnel { width: 11px; height: 12px; margin-left: 2px; margin-right: 3px; }
.a-ico.sig { width: 12px; height: 13px; margin-left: 2px; margin-right: 3px; }
.area-box { height: 80px; box-sizing: border-box; border: 1px solid #a3adbd; background: #d5dbe8; display: flex; overflow: hidden; }
.area-box.white { background: #fff; }
.row-box { background: #fff; }
.area-chips { flex: 1; min-width: 0; display: flex; flex-direction: column; gap: 1px; padding: 1px 0 0 1px; }
.area-chip {
  height: 20px;
  flex: none;
  box-sizing: border-box;
  border: 1px solid #a3adbd;
  background: #f8faff;
  display: flex;
  align-items: center;
  gap: 4px;
  padding-left: 5px;
  white-space: nowrap;
  overflow: hidden;
}
.area-chip.wide { width: 108px; padding-left: 8px; }
.area-chip.plain { padding-left: 4px; }
.vscroll.small { width: 16px; }
.defer-row { display: flex; justify-content: space-between; align-items: flex-start; margin-top: 6px; margin-right: -1px; }
.defer { display: flex; align-items: center; gap: 4px; height: 22px; padding-left: 1px; }
.check { width: 13px; height: 13px; box-sizing: border-box; border: 1px solid #a3adbd; background: #fff; }
.update-btn { width: 42px; height: 22px; box-sizing: border-box; border: 1px solid #b5bccc; color: #a9b3c6; text-align: center; line-height: 20px; }
.v-split {
  flex: 1;
  border-right: 1px solid #a3adbd;
  display: flex;
  align-items: center;
  justify-content: flex-end;
  padding-right: 3px;
}
.grip-v {
  width: 5px;
  height: 19px;
  background-image: radial-gradient(#8d98ad 0.6px, transparent 0.7px);
  background-size: 2px 2px;
}

/* pivot */
.pivot { flex: 1; min-width: 0; display: flex; flex-direction: column; overflow: hidden; }
.chip {
  height: 22px;
  flex: none;
  box-sizing: border-box;
  border: 1px solid #a3adbd;
  background: #f8faff;
  display: flex;
  align-items: center;
  gap: 4px;
  padding-left: 5px;
  position: relative;
  white-space: nowrap;
}
.chip-ico { width: 16px; height: 16px; }
.chip-ico.d { width: 14px; height: 14px; }
.chip-ico.t { width: 13px; height: 13px; }
.chip-flag { width: 8px; height: 8px; position: absolute; right: 3px; top: 3px; }
.filter-fields {
  display: flex;
  flex-wrap: wrap;
  gap: 2px 3px;
  padding: 4px 0 5px 4px;
  border-bottom: 1px solid #a3adbd;
}
.col-fields { display: flex; gap: 4px; padding: 3px 0 0 4px; height: 25px; box-sizing: border-box; align-items: flex-start; }
.chip.data { width: 38px; gap: 4px; padding-left: 6px; color: #3a4868; }
.drop-hint { color: #a9b3c6; margin-left: 7px; line-height: 22px; }
.head-row { display: flex; height: 44px; margin-top: 2px; flex: none; }
.head-left {
  width: 385px;
  flex: none;
  box-sizing: border-box;
  padding: 20px 0 0 4px;
  display: flex;
  gap: 3px;
  border-bottom: 1px solid #b3bccc;
}
.chip.short { width: 279px; padding-left: 7px; gap: 5px; }
.chip.disch { width: 97px; padding-left: 5px; }
.sort {
  width: 0;
  height: 0;
  border-left: 4px solid transparent;
  border-right: 4px solid transparent;
  border-bottom: 5px solid #6e7684;
  margin-left: auto;
  margin-right: 8px;
}
.area-chip .sort { margin-right: 9px; }
.head-right { flex: 1; display: flex; flex-direction: column; background: #f8faff; }
.grand { height: 22px; flex: none; }
.grand-cell {
  width: 900px;
  height: 22px;
  box-sizing: border-box;
  border-right: 1px solid #c7cbdb;
  border-bottom: 1px solid #c7cbdb;
  display: flex;
  align-items: center;
  gap: 4px;
  padding-left: 4px;
  border-top: 1px solid #e1e5ee;
}
.gt-ico { width: 16px; height: 15px; }
.col-heads { display: flex; height: 22px; border-bottom: 1px solid #b3bccc; box-sizing: border-box; }
.col-head {
  width: 100px;
  flex: none;
  box-sizing: border-box;
  border-right: 1px solid #c7cbdb;
  display: flex;
  align-items: center;
  gap: 5px;
  padding-left: 6px;
  position: relative;
  white-space: nowrap;
}
.col-head.i-fx .chip-ico { width: 15px; height: 15px; }
.sort-mark { width: 7px; height: 9px; position: absolute; right: 4px; top: 3px; }
.pivot-body { flex: 1; min-height: 0; display: flex; justify-content: space-between; background: #fff; overflow: hidden; }
.pivot-grid { width: 1285px; flex: none; }
.group { display: flex; }
.group-label {
  width: 285px;
  flex: none;
  box-sizing: border-box;
  height: auto;
  background: #f8faff;
  border-right: 1px solid #c7cbdb;
  border-bottom: 1px solid #c7cbdb;
  padding: 5px 0 0 9px;
  display: flex;
  align-items: flex-start;
  gap: 5px;
  line-height: 13px;
}
.group-label .tri { margin-top: 4px; }
.group-label .chip-ico { margin-left: 1px; }
.group-rows { flex: none; }
.grid-row { display: flex; height: 22px; }
.cell {
  width: 100px;
  height: 22px;
  flex: none;
  box-sizing: border-box;
  border-right: 1px solid #c7cbdb;
  border-bottom: 1px solid #c7cbdb;
  background: #ebfbff;
  display: flex;
  align-items: center;
}
.cell.month { background: #f8faff; padding-left: 6px; gap: 4px; color: #1f2e50; }
.cal { width: 14px; height: 14px; }
.cell.num { justify-content: flex-end; padding-right: 5px; color: #14171f; }
.cell.month.num { justify-content: flex-start; }
.cell.ic { justify-content: space-between; padding-left: 4px; }
.cell.ic em { font-style: normal; padding-top: 2px; }
.cell.ic.tr { padding-right: 7px; }
.cell svg.up, .cell svg.down { width: 14px; height: 16px; }
.cell svg.sigma { width: 14px; height: 14px; }
.cell svg.eq { width: 14px; height: 14px; }
.cell svg.gt { width: 15px; height: 14px; }
.marked .pct { background: #fef2bd; }
.total-label {
  width: 385px;
  height: 22px;
  flex: none;
  box-sizing: border-box;
  background: #f8faff;
  border-right: 1px solid #c7cbdb;
  border-bottom: 1px solid #c7cbdb;
  display: flex;
  align-items: center;
  padding-left: 5px;
  gap: 5px;
}
.tl-name { width: 115px; flex: none; }
.vscroll.big { height: 100%; background: #d5dbe8; }

/* chart */
.chart-frame { flex: none; height: 453px; border-left: 1px solid #d5dbe8; box-sizing: border-box; background: #29395a; }
.chart-inner {
  margin: 4px 4px 0 3px;
  height: 445px;
  background: #d5dbe8;
  border-left: 1px solid #d5dbe8;
  display: flex;
  flex-direction: column;
  box-sizing: border-box;
}
.chart-head {
  height: 21px;
  flex: none;
  background: #fff09e;
  display: flex;
  justify-content: space-between;
  align-items: center;
  padding: 0 5px;
}
.chart-tools {
  height: 29px;
  flex: none;
  box-sizing: border-box;
  margin-top: 2px;
  border-top: 1px solid #a3adbd;
  background: #d0d7e6;
  display: flex;
  align-items: center;
  gap: 1px;
  padding: 1px 0 0 2px;
}
.tool { width: 24px; height: 21px; box-sizing: border-box; display: flex; align-items: center; justify-content: center; }
.tool.selected { background: #fff09e; border: 1px solid #e4c66e; }
.tool-sep { width: 1px; height: 16px; background: #99a3b5; margin: 0 21px 0 7px; }
.gear { margin-left: 9px; }
.chart-strip { height: 7px; flex: none; background: #b3a5ab; }
.plot { background: #fff; flex: none; }
.axis-text { font-size: 11px; fill: #223355; font-family: Roboto, "Liberation Sans", sans-serif; }
.chart-nav {
  height: 17px;
  flex: none;
  box-sizing: border-box;
  border-top: 1px solid #a3adbd;
  background: #d0d7e6;
  display: flex;
  align-items: center;
  padding-left: 2px;
}
.record { width: 75px; height: 16px; background: #fff; line-height: 16px; text-align: left; padding-left: 4px; box-sizing: border-box; }
.foot { height: 18px; flex: none; background: #29395a; }
</style>
